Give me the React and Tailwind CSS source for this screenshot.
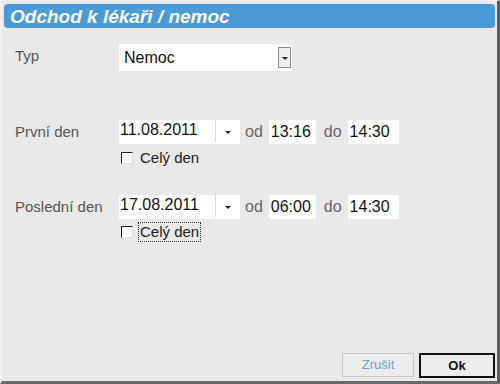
export default function App() {
  const font = { fontFamily: '"Liberation Sans", Arial, sans-serif' };
  return (
    <div className="w-[500px] h-[384px] bg-[#e9e9e9] relative overflow-hidden border-l-2 border-l-[#f4f4f4] border-r-[3px] border-r-[#5a5a5a] border-b-[3px] border-b-[#6a6a6a] border-t border-t-[#f0f0f0]" style={font}>
      <div className="mt-[3px] ml-[2px] mr-[2px] h-[24px] bg-[#4a9ad8] rounded-[4px] flex items-center pl-[6px]">
        <span className="text-white font-bold italic text-[19px] leading-none">Odchod k lékaři / nemoc</span>
      </div>
      <div className="flex flex-col">
        <div className="flex items-center mt-[16px] h-[27px]">
          <span className="w-[117px] pl-[13px] text-[15px] text-[#555] -mt-[3px]">Typ</span>
          <div className="w-[173px] h-[27px] bg-white flex items-center justify-between">
            <span className="pl-[5px] text-[16px] text-[#111]">Nemoc</span>
            <div className="w-[13px] h-[21px] mr-[1px] border border-[#8a8a8a] bg-[#f0f0f0] flex items-center justify-center">
              <span className="block w-0 h-0 border-l-[3px] border-r-[3px] border-t-[3px] border-l-transparent border-r-transparent border-t-[#222] mt-[1px]"></span>
            </div>
          </div>
        </div>

        <div className="flex items-center mt-[49px] h-[24px]">
          <span className="w-[117px] pl-[13px] text-[15px] text-[#555] mt-[1px]">První den</span>
          <DateRow date="11.08.2011" from="13:16" to="14:30" />
        </div>
        <div className="flex items-center mt-[7px] ml-[119px] h-[14px]">
          <span className="w-[12px] h-[12px] bg-white border-l border-t border-[#222] border-r border-r-[#ddd] border-b border-b-[#ddd]"></span>
          <span className="ml-[7px] text-[15px] text-[#222]">Celý den</span>
        </div>

        <div className="flex items-center mt-[30px] h-[24px]">
          <span className="w-[117px] pl-[13px] text-[15px] text-[#555] mt-[1px]">Poslední den</span>
          <DateRow date="17.08.2011" from="06:00" to="14:30" />
        </div>
        <div className="flex items-center mt-[6px] ml-[119px] h-[14px]">
          <span className="w-[12px] h-[12px] bg-white border-l border-t border-[#222] border-r border-r-[#ddd] border-b border-b-[#ddd]"></span>
          <span className="ml-[5px] px-[1px] text-[15px] text-[#222] border border-dotted border-[#333] leading-[18px]">Celý den</span>
        </div>
      </div>

      <div className="absolute right-[2px] bottom-[3px] flex gap-[5px]">
        <div className="w-[72px] h-[24px] border border-[#c8c8c8] bg-[#ececec] flex items-center justify-center text-[13px] text-[#6f9fd4]">Zrušit</div>
        <div className="w-[76px] h-[25px] border-2 border-[#111] bg-[#ececec] flex items-center justify-center text-[13px] font-bold text-[#111]">Ok</div>
      </div>
    </div>
  );
}

function DateRow({ date, from, to }) {
  return (
    <div className="flex items-center">
      <div className="w-[121px] h-[24px] bg-white flex items-center">
        <span className="w-[97px] pl-[1px] text-[16px] text-[#111] -mt-[4px] border-r border-[#d8d8d8] h-full flex items-center">{date}</span>
        <span className="flex-1 flex items-center justify-center">
          <span className="block w-0 h-0 border-l-[3px] border-r-[3px] border-t-[3px] border-l-transparent border-r-transparent border-t-[#222]"></span>
        </span>
      </div>
      <span className="ml-[5px] text-[16px] text-[#666]">od</span>
      <div className="ml-[6px] w-[47px] h-[24px] bg-white flex items-center text-[16px] text-[#111] pl-[2px]">{from}</div>
      <span className="ml-[8px] text-[16px] text-[#666]">do</span>
      <div className="ml-[6px] w-[51px] h-[24px] bg-white flex items-center text-[16px] text-[#111] pl-[2px]">{to}</div>
    </div>
  );
}
